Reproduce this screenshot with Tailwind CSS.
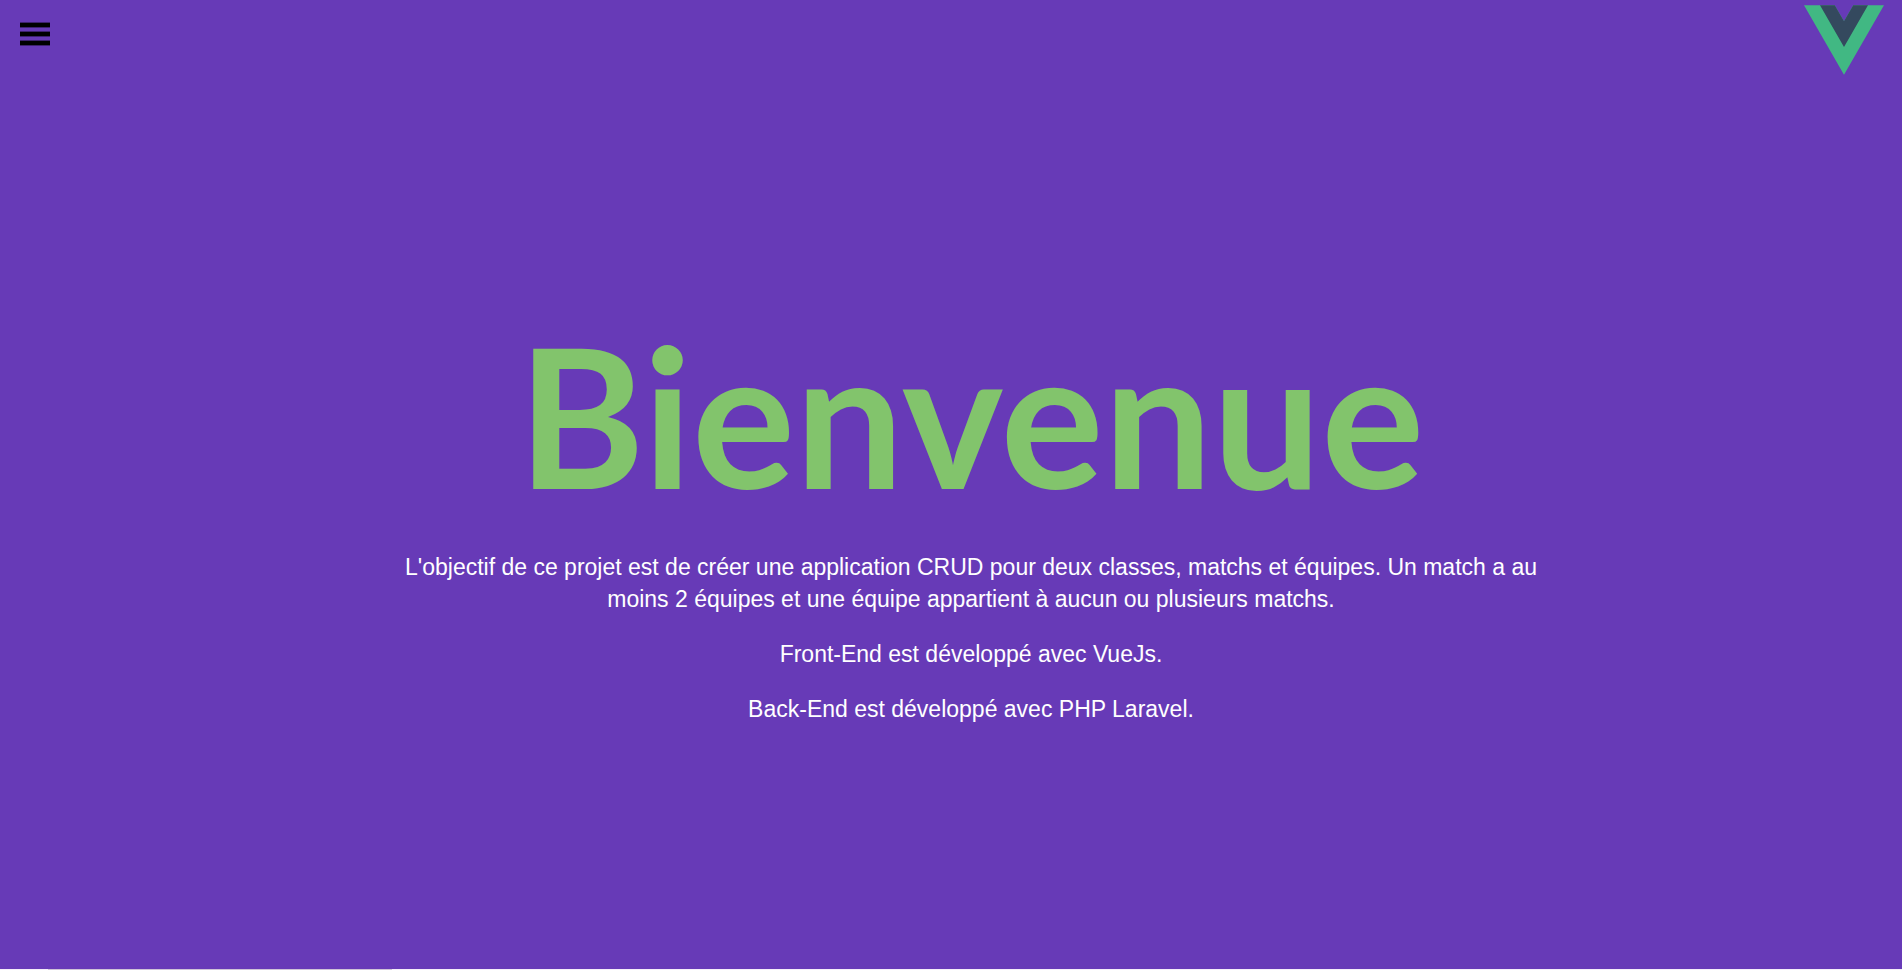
<!DOCTYPE html>
<html lang="fr">
<head>
<meta charset="utf-8">
<meta name="viewport" content="width=device-width, initial-scale=1">
<title>Bienvenue</title>
<script src="https://cdn.jsdelivr.net/npm/@tailwindcss/browser@4"></script>
</head>
<body class="flex h-screen flex-col bg-[#f5eefa] font-['Liberation_Sans',Arial,sans-serif]">
<div class="flex flex-1 flex-col bg-[#673ab7]">
  <header class="flex items-start justify-between pr-[18px] pl-5 pt-[5px]">
    <button type="button" aria-label="Menu" class="mt-[17px] cursor-pointer">
      <svg class="block h-6 w-[30px]" viewBox="0 0 30 24" fill="#000" aria-hidden="true">
        <rect y="0.6" width="30" height="4.8"/><rect y="9.6" width="30" height="4.8"/><rect y="18.6" width="30" height="4.8"/>
      </svg>
    </button>
    <a href="#" aria-label="Vue.js">
      <svg class="block h-[70px] w-20" viewBox="0 0 261.76 226.69" aria-hidden="true">
        <path fill="#41b883" d="M161.096.001l-30.225 52.351L100.647.001H-.005l130.877 226.688L261.749.001z"/>
        <path fill="#34495e" d="M161.096.001l-30.225 52.351L100.647.001H52.346l78.526 136.01L209.398.001z"/>
      </svg>
    </a>
  </header>
  <main class="flex flex-col items-center gap-4 pt-[220px] pl-10 text-center">
    <h1 class="font-['Lato',sans-serif] text-[193px] leading-[240px] font-bold text-[#82c46c]">Bienvenue</h1>
    <div class="flex max-w-[1160px] flex-col gap-[23px] text-[23px] leading-8 text-white">
      <p>L'objectif de ce projet est de créer une application CRUD pour deux classes, matchs et équipes. Un match a au moins 2 équipes et une équipe appartient à aucun ou plusieurs matchs.</p>
      <p>Front-End est développé avec VueJs.</p>
      <p>Back-End est développé avec PHP Laravel.</p>
    </div>
  </main>
</div>
<div class="flex h-px pl-12"><div class="w-[344px] bg-[#cfc4d8]"></div></div>
</body>
</html>
